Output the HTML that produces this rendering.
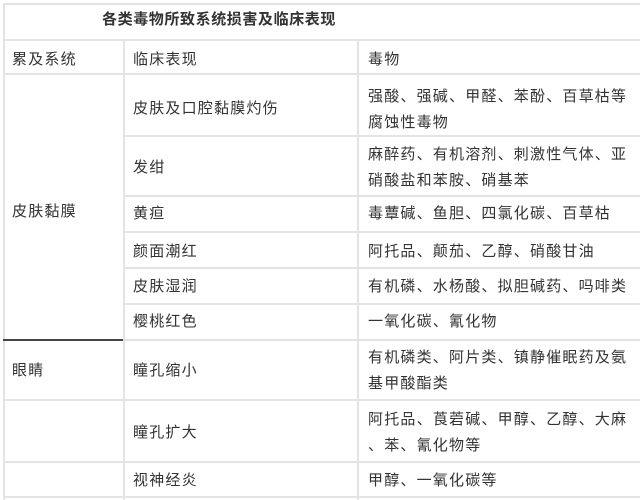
<!DOCTYPE html>
<html><head><meta charset="utf-8"><style>
body{margin:0;width:640px;height:500px;background:#fff;position:relative;overflow:hidden;font-family:"Liberation Sans","Noto Sans CJK SC",sans-serif;color:#333;font-size:15px;letter-spacing:1.2px}
.h{position:absolute;height:2px;background:#e4e4e4}
.v{position:absolute;width:2px;background:#e4e4e4}
.t{position:absolute;line-height:18px;white-space:nowrap}
</style></head><body>
<div class="h" style="left:3px;top:3px;width:637px"></div>
<div class="v" style="left:3px;top:3px;height:497px"></div>
<div class="h" style="left:3px;top:39px;width:637px"></div>
<div class="h" style="left:3px;top:73px;width:637px"></div>
<div class="v" style="left:123px;top:39px;height:461px"></div>
<div class="v" style="left:357px;top:39px;height:461px"></div>
<div class="h" style="left:123px;top:135px;width:517px"></div>
<div class="h" style="left:123px;top:195px;width:517px"></div>
<div class="h" style="left:123px;top:231px;width:517px"></div>
<div class="h" style="left:123px;top:267px;width:517px"></div>
<div class="h" style="left:123px;top:303px;width:517px"></div>
<div class="h" style="left:123px;top:339px;width:517px"></div>
<div class="h" style="left:3px;top:339px;width:120px;background:#444"></div>
<div class="h" style="left:3px;top:399px;width:637px"></div>
<div class="h" style="left:3px;top:461px;width:637px"></div>
<div class="h" style="left:3px;top:496px;width:637px"></div>

<div class="t" style="left:102px;top:11px;font-weight:bold;letter-spacing:0.6px">各类毒物所致系统损害及临床表现</div>
<div class="t" style="left:12px;top:51px">累及系统</div>
<div class="t" style="left:133px;top:51px">临床表现</div>
<div class="t" style="left:368px;top:51px">毒物</div>

<div class="t" style="left:133px;top:100px">皮肤及口腔黏膜灼伤</div>
<div class="t" style="left:368px;top:88px">强酸、强碱、甲醛、苯酚、百草枯等</div>
<div class="t" style="left:368px;top:114px">腐蚀性毒物</div>

<div class="t" style="left:133px;top:159px">发绀</div>
<div class="t" style="left:368px;top:146px">麻醉药、有机溶剂、刺激性气体、亚</div>
<div class="t" style="left:368px;top:172px">硝酸盐和苯胺、硝基苯</div>

<div class="t" style="left:12px;top:203px">皮肤黏膜</div>
<div class="t" style="left:133px;top:205px">黄疸</div>
<div class="t" style="left:368px;top:205px">毒蕈碱、鱼胆、四氯化碳、百草枯</div>
<div class="t" style="left:133px;top:243px">颜面潮红</div>
<div class="t" style="left:368px;top:243px">阿托品、颠茄、乙醇、硝酸甘油</div>
<div class="t" style="left:133px;top:278px">皮肤湿润</div>
<div class="t" style="left:368px;top:278px">有机磷、水杨酸、拟胆碱药、吗啡类</div>
<div class="t" style="left:133px;top:313px">樱桃红色</div>
<div class="t" style="left:368px;top:313px">一氧化碳、氰化物</div>

<div class="t" style="left:12px;top:362px">眼睛</div>
<div class="t" style="left:133px;top:362px">瞳孔缩小</div>
<div class="t" style="left:368px;top:349px">有机磷类、阿片类、镇静催眠药及氨</div>
<div class="t" style="left:368px;top:375px">基甲酸酯类</div>

<div class="t" style="left:133px;top:424px">瞳孔扩大</div>
<div class="t" style="left:368px;top:411px">阿托品、莨菪碱、甲醇、乙醇、大麻</div>
<div class="t" style="left:368px;top:437px">、苯、氰化物等</div>

<div class="t" style="left:133px;top:472px">视神经炎</div>
<div class="t" style="left:368px;top:472px">甲醇、一氧化碳等</div>
</body></html>
